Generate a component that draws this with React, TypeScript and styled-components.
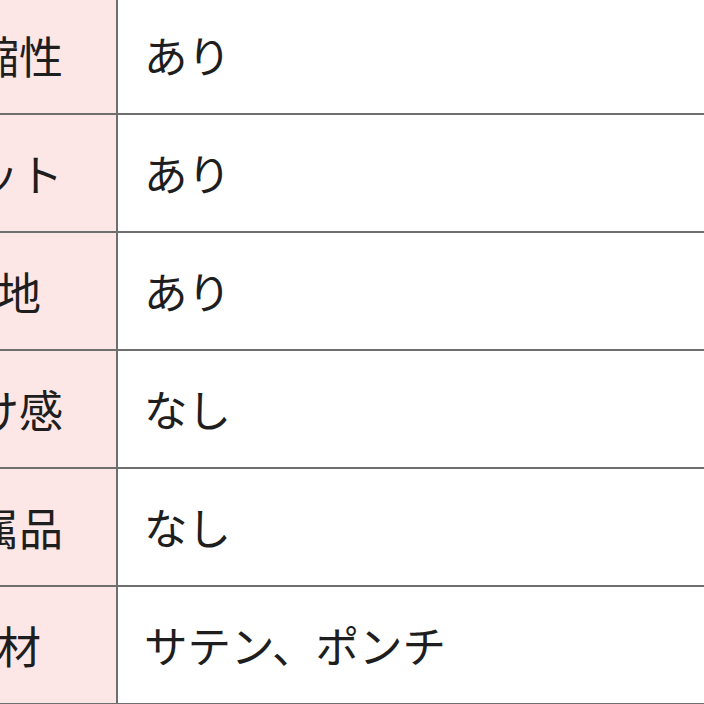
import styled, { createGlobalStyle } from "styled-components";

const GlobalStyle = createGlobalStyle`
  html, body {
    margin: 0;
    padding: 0;
    background: #ffffff;
    overflow: hidden;
  }
  body {
    font-family: "Noto Sans CJK JP", "Noto Sans", sans-serif;
    color: #1e1e1e;
  }
`;

const Table = styled.div`
  display: grid;
  grid-template-columns: 244px 1fr;
  margin-top: -3px;
  margin-left: -126px;
  width: calc(100% + 126px);
`;

const HeadCell = styled.div`
  height: 116px;
  display: flex;
  align-items: center;
  justify-content: center;
  padding-left: 4px;
  background: #fde6e6;
  border-right: 2px solid #6e6e6e;
  border-bottom: 2px solid #6e6e6e;
  font-size: 44px;
  line-height: 1;
  white-space: nowrap;
`;

const ValueCell = styled.div`
  height: 116px;
  display: flex;
  align-items: center;
  padding-left: 26px;
  border-bottom: 2px solid #6e6e6e;
  font-size: 43.5px;
  line-height: 1;
  white-space: nowrap;
`;

const rows = [
  { label: "伸縮性", value: "あり" },
  { label: "セット", value: "あり" },
  { label: "裏地", value: "あり" },
  { label: "透け感", value: "なし" },
  { label: "付属品", value: "なし" },
  { label: "素材", value: "サテン、ポンチ" },
];

const App = () => {
  return (
    <>
      <GlobalStyle />
      <Table>
        {rows.map((row) => [
          <HeadCell key={row.label + "-h"}>{row.label}</HeadCell>,
          <ValueCell key={row.label + "-v"}>{row.value}</ValueCell>,
        ])}
      </Table>
    </>
  );
};

export default App;
